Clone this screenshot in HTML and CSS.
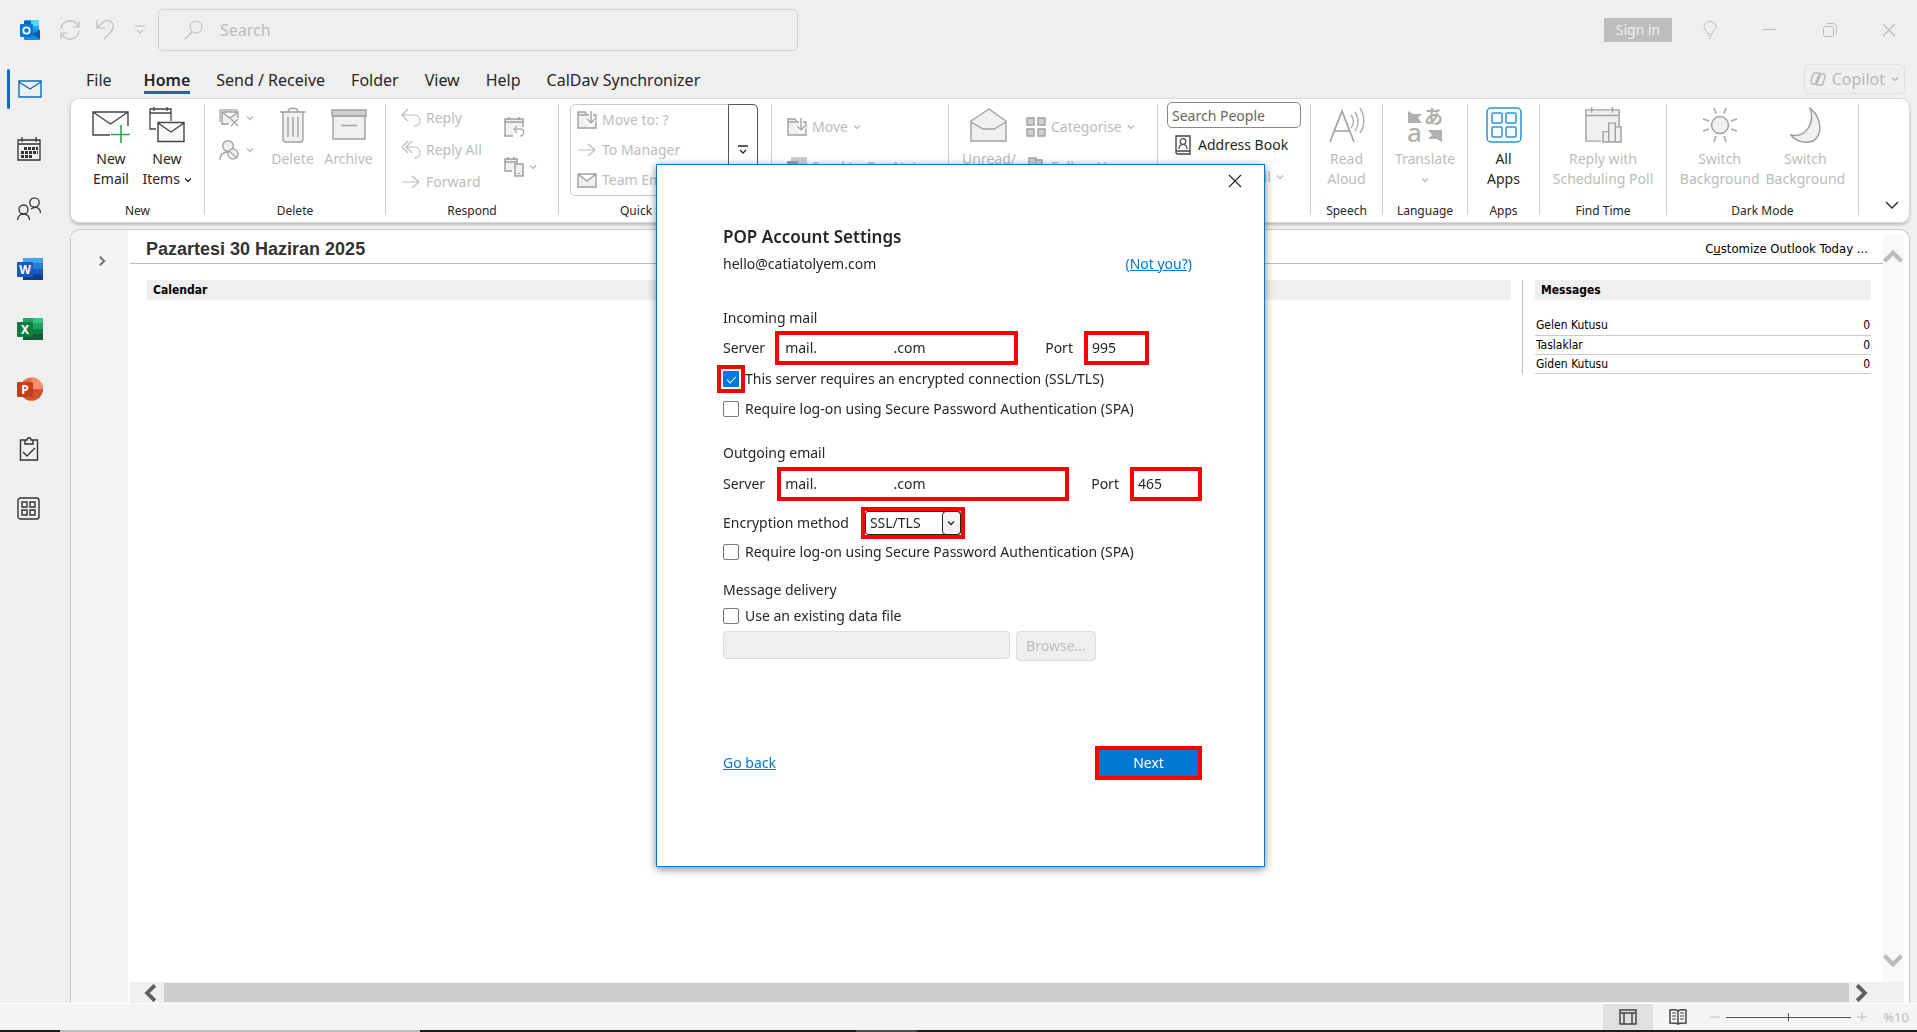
FILE: index.html
```html
<!DOCTYPE html>
<html lang="en">
<head>
  <meta charset="UTF-8" />
  <meta name="viewport" content="width=device-width, initial-scale=1.0"/>
  <title>Outlook - POP Account Settings</title>
  <link rel="stylesheet" href="styles.css">
</head>
<body>
  <!-- Shared icons -->
  <svg class="sprite" aria-hidden="true">
    <symbol id="chevron" viewBox="0 0 8 8"><path d="M1 2.500l3 3 3-3" fill="none" stroke="currentColor" stroke-width="1.300"/></symbol>
    <symbol id="close" viewBox="0 0 14 14"><path d="M1 1l12 12M13 1L1 13" fill="none" stroke="currentColor" stroke-width="1.200"/></symbol>
    <symbol id="arrow-right" viewBox="0 0 20 20"><path d="M1 10h17M11 4l7 6-7 6" fill="none" stroke="currentColor" stroke-width="1.200"/></symbol>
    <symbol id="arrow-thick" viewBox="0 0 14 14"><path d="M4 1l6 6-6 6" fill="none" stroke="currentColor" stroke-width="3"/></symbol>
    <symbol id="move" viewBox="0 0 20 20">
      <path d="M1 18V2h7l2 3h9v13z" fill="#f0f0f0" stroke="#a0a0a0" stroke-width="1.400"/>
      <path d="M1 5h8" stroke="#a0a0a0" stroke-width="1.400"/>
      <path d="M14 0v13M9 9l5 5 4-5" fill="none" stroke="#fff" stroke-width="4"/>
      <path d="M14 1v12M10 9l4 4 4-4" fill="none" stroke="#a8a8a8" stroke-width="1.500"/>
    </symbol>
  </svg>

  <header class="titlebar">
    <svg class="logo" viewBox="0 0 20 20">
      <path d="M5 0h13a1 1 0 0 1 1 1v11H4V1a1 1 0 0 1 1-1z" fill="#28a8ea"/>
      <path d="M4 1h7v6H4z" fill="#0364b8"/>
      <path d="M11 0h8v6h-8z" fill="#50d9ff"/>
      <path d="M4 19V10l15-1 1 1v9a1 1 0 0 1-1 1H5a1 1 0 0 1-1-1z" fill="#1490df"/>
      <path d="M20 10v9l-8-5z" fill="#0a5ba8"/>
      <rect y="4" width="13" height="13" rx="1" fill="#0078d4"/>
      <circle cx="6.500" cy="10.500" r="3.200" fill="none" stroke="#fff" stroke-width="1.800"/>
    </svg>
    <button class="quick" aria-label="Send/Receive all folders">
      <svg viewBox="0 0 20 20" width="20" height="20"><path d="M1 9a9 9 0 0 1 17-3M19 1v6h-6M19 11a9 9 0 0 1-17 3M1 19v-6h6" fill="none" stroke="currentColor" stroke-width="1.200"/></svg>
    </button>
    <button class="quick" aria-label="Undo">
      <svg viewBox="0 0 20 20" width="20" height="20"><path d="M2 0v8h8M2 8l5-5c4-4 9-3 11 1 1 4 0 6-3 9l-6 6" fill="none" stroke="currentColor" stroke-width="1.200"/></svg>
    </button>
    <button class="quick more" aria-label="Customise toolbar">
      <svg viewBox="0 0 10 10" width="10" height="10"><path d="M0 1h10M2 5l3 3 3-3" fill="none" stroke="currentColor" stroke-width="1.200"/></svg>
    </button>
    <label class="search">
      <svg viewBox="0 0 20 20" width="20" height="20"><circle cx="12" cy="7" r="6" fill="none" stroke="currentColor"/><path d="M8 12l-7 7" stroke="currentColor" stroke-width="1.200"/></svg>
      <input type="text" placeholder="Search" aria-label="Search">
    </label>
    <div class="window-buttons">
      <button class="signin">Sign in</button>
      <button aria-label="Tips"><svg viewBox="0 0 14 18" width="14" height="18"><path d="M5 13c0-3-4-4-4-7a6 5.500 0 0 1 12 0c0 3-4 4-4 7zM5 15h4M6 17.500h2" fill="none" stroke="currentColor"/></svg></button>
      <button aria-label="Minimise"><svg viewBox="0 0 14 14" width="14" height="14"><path d="M0 6.500h13" stroke="currentColor"/></svg></button>
      <button aria-label="Restore"><svg viewBox="0 0 14 14" width="14" height="14"><rect x=".5" y="3.500" width="10" height="10" rx="2" fill="none" stroke="currentColor"/><path d="M3 1.500Q4 .5 5 .5h5q3.500 0 3.500 3.500v5q0 1-1 2" fill="none" stroke="currentColor"/></svg></button>
      <button aria-label="Close"><svg width="14" height="14"><use href="#close"/></svg></button>
    </div>
  </header>

  <div class="workspace">
    <nav class="rail">
      <a href="#mail" class="active" aria-label="Mail"><svg viewBox="0 0 24 18" width="24" height="18"><path d="M1 1h22v16H1zM1 2l11 7 11-7" fill="none" stroke="currentColor" stroke-width="1.400"/></svg></a>
      <a href="#calendar" aria-label="Calendar"><svg viewBox="0 0 24 24" width="24" height="24"><path d="M1 3h22v20H1zM1 7h22M5 0v5M19 0v5" fill="none" stroke="currentColor" stroke-width="1.300"/><path d="M7 11.500h14M4 15.500h17M4 19.500h11" stroke="currentColor" stroke-width="3" stroke-dasharray="3 1"/></svg></a>
      <a href="#people" aria-label="People"><svg viewBox="0 0 24 24" width="24" height="24"><g fill="none" stroke="currentColor" stroke-width="1.300"><circle cx="17.500" cy="5.500" r="4.700"/><circle cx="6.500" cy="12.500" r="4.500"/><path d="M.6 23c.5-8 11-8 12 0M14 12c4-3 9-2 9.500 4"/></g></svg></a>
      <a href="#word" aria-label="Word"><svg viewBox="0 0 26 24" width="26" height="24"><path d="M6 1h20v6H6z" fill="#41a5ee"/><path d="M6 6h20v6H6z" fill="#2b7cd3"/><path d="M6 12h20v6H6z" fill="#185abd"/><path d="M6 17h20v6H6z" fill="#103f91"/><rect y="5" width="16" height="15" rx="1" fill="#185abd"/><text x="8" y="17" class="app-letter">W</text></svg></a>
      <a href="#excel" aria-label="Excel"><svg viewBox="0 0 26 24" width="26" height="24"><path d="M6 1h10v6H6z" fill="#21a366"/><path d="M16 1h10v6H16z" fill="#33c481"/><path d="M6 6h20v6H6z" fill="#21a366"/><path d="M6 12h20v6H6z" fill="#107c41"/><path d="M6 17h20v6H6z" fill="#185c37"/><rect y="5" width="16" height="15" rx="1" fill="#107c41"/><text x="8" y="17" class="app-letter">X</text></svg></a>
      <a href="#powerpoint" aria-label="PowerPoint"><svg viewBox="0 0 26 24" width="26" height="24"><circle cx="14.500" cy="12" r="11.500" fill="#ed6c47"/><path d="M14.500.5A11.500 11.500 0 0 1 26 12H14.500z" fill="#ff8f6b"/><path d="M3 12h23a11.500 11.500 0 0 1-23 0z" fill="#d35230"/><rect y="5" width="16" height="15" rx="1" fill="#c43e1c"/><text x="8" y="17" class="app-letter">P</text></svg></a>
      <a href="#todo" aria-label="To Do"><svg viewBox="0 0 24 24" width="24" height="24"><path d="M8 3H3.500v20h17V3H16M8 7V3h2c0-3 4-3 4 0h2v4zM6 15l4 4 8-8" fill="none" stroke="currentColor" stroke-width="1.400"/></svg></a>
      <a href="#apps" aria-label="More apps"><svg viewBox="0 0 24 24" width="24" height="24"><g fill="none" stroke="currentColor" stroke-width="1.400"><rect x="1" y="1" width="21" height="21" rx="2.500"/><path d="M5 5h5v5H5zM13 5h5v5h-5zM5 13h5v5H5zM13 13h5v5h-5z"/></g></svg></a>
    </nav>

    <main class="main">
      <div class="tabs">
        <a href="#file" class="file-tab">File</a>
        <a href="#home" class="active">Home</a>
        <a href="#send">Send / Receive</a>
        <a href="#folder">Folder</a>
        <a href="#view">View</a>
        <a href="#help">Help</a>
        <a href="#caldav">CalDav Synchronizer</a>
        <button class="copilot">
          <svg viewBox="0 0 16 16" width="16" height="16"><path d="M5 2h4c2 0 1 2 1 3L8 10c-1 2-1 3-3 3H3c-2 0-2-2-2-3l2-6c0-1 1-2 2-2zM11 3h2c2 0 2 2 2 3l-2 6c0 1-1 2-2 2H7c-2 0-1-2-1-3l2-5c1-2 1-3 3-3z" fill="none" stroke="currentColor" stroke-width="1.500"/></svg>
          Copilot
          <svg width="8" height="8"><use href="#chevron"/></svg>
        </button>
      </div>

      <!-- Ribbon -->
      <section class="ribbon">
        <div class="group g-new">
          <div class="tools">
            <button class="big">
              <svg viewBox="0 0 38 36" width="38" height="36"><path d="M1 5h35v23H1z" fill="#fafafa"/><path d="M18 28H1V5h35v14M1 5l17.500 12L36 5" fill="none" stroke="#444" stroke-width="1.400"/><path d="M29 18v19M19 27.500h19" stroke="#fff" stroke-width="4"/><path d="M29 18v19M19 27.500h19" stroke="#2ea44f" stroke-width="1.600"/></svg>
              <span>New<br>Email</span>
            </button>
            <button class="big">
              <svg viewBox="0 0 36 36" width="36" height="36"><path d="M7 22H1V2h21v12M1 6h21M5 0v4M18 0v4" fill="none" stroke="#444" stroke-width="1.300"/><path d="M9 15.500h26v19H9zM9 16l13 9 13-9" fill="#fafafa" stroke="#444" stroke-width="1.400"/></svg>
              <span>New<br>Items <svg width="8" height="8"><use href="#chevron"/></svg></span>
            </button>
          </div>
          <h2>New</h2>
        </div>

        <div class="group g-delete">
          <div class="tools">
            <div class="stack small">
              <button class="tool off" disabled aria-label="Ignore"><svg viewBox="0 0 20 20" width="20" height="20"><path d="M1 14V2h18" fill="none" stroke="#b0b0b0" stroke-width="1.500"/><path d="M10 16H3V4h16v6M3 4l8 6 8-6" fill="#f0f0f0" stroke="#a0a0a0" stroke-width="1.400"/><path d="M12 11l7 7M19 11l-7 7" stroke="#a0a0a0" stroke-width="1.400"/></svg><svg width="8" height="8"><use href="#chevron"/></svg></button>
              <button class="tool off" disabled aria-label="Junk"><svg viewBox="0 0 20 20" width="20" height="20"><circle cx="9" cy="6" r="5.300" fill="#f0f0f0" stroke="#a0a0a0" stroke-width="1.400"/><path d="M1 20c0-5 3-8 8-8" fill="none" stroke="#a0a0a0" stroke-width="1.400"/><circle cx="14" cy="14" r="5" fill="#f4f4f4" stroke="#a8a8a8" stroke-width="1.400"/><path d="M10 11l8 7" stroke="#a8a8a8" stroke-width="1.400"/></svg><svg width="8" height="8"><use href="#chevron"/></svg></button>
            </div>
            <button class="big off" disabled>
              <svg viewBox="0 0 28 36" width="28" height="36"><path d="M4 5h20v27q0 3-3 3H7q-3 0-3-3z" fill="#f0f0f0"/><path d="M1 5h26M4 5v27q0 3 3 3h14q3 0 3-3V5M9 5c0-5 10-5 10 0M9 10v20M14 10v20M19 10v20" fill="none" stroke="#a0a0a0" stroke-width="1.400"/></svg>
              <span>Delete</span>
            </button>
            <button class="big off" disabled>
              <svg viewBox="0 0 36 36" width="36" height="36"><path d="M2 9h32v23H2z" fill="#f0f0f0" stroke="#a0a0a0" stroke-width="1.400"/><path d="M1 3h34v6H1z" fill="#d0d0d0" stroke="#a0a0a0" stroke-width="1.400"/><path d="M10 18.500h16" stroke="#a0a0a0" stroke-width="1.400"/></svg>
              <span>Archive</span>
            </button>
          </div>
          <h2>Delete</h2>
        </div>

        <div class="group g-respond">
          <div class="tools">
            <div class="stack">
              <button class="tool off" disabled><svg viewBox="0 0 20 20" width="20" height="20"><path d="M7 1L1 7l6 6M1 7h12c8 0 8 11 0 11" fill="none" stroke="currentColor" stroke-width="1.200"/></svg>Reply</button>
              <button class="tool off" disabled><svg viewBox="0 0 20 20" width="20" height="20"><path d="M7 1L1 7l6 6M11 1L5 7l6 6M5 7h8c8 0 8 11 0 11" fill="none" stroke="currentColor" stroke-width="1.200"/></svg>Reply All</button>
              <button class="tool off" disabled><svg width="20" height="20"><use href="#arrow-right"/></svg>Forward</button>
            </div>
            <div class="stack pair">
              <button class="tool off" disabled aria-label="Meeting"><svg viewBox="0 0 20 20" width="20" height="20"><path d="M1 2h18v17H1z" fill="#f0f0f0"/><path d="M9 19H1V2h18v8M1 5h18M5 0v3M15 0v3" fill="none" stroke="#a0a0a0" stroke-width="1.500"/><path d="M20 10v10H9V9z" fill="#fff"/><path d="M13 9l-3 3 3 4M10 12h6c5 0 5 7 0 7" fill="none" stroke="#b0b0b0" stroke-width="1.400"/></svg></button>
              <button class="tool off" disabled aria-label="More respond actions"><svg viewBox="0 0 20 20" width="20" height="20"><path d="M8 14H1V2h12v4M1 5h12M4 0v3M10 0v3" fill="#f0f0f0" stroke="#a0a0a0" stroke-width="1.500"/><path d="M11 7h8v12h-8z" fill="#f0f0f0" stroke="#a0a0a0" stroke-width="1.500"/><path d="M14 16.500h2" stroke="#a0a0a0"/></svg><svg width="8" height="8"><use href="#chevron"/></svg></button>
            </div>
          </div>
          <h2>Respond</h2>
        </div>

        <div class="group g-quick">
          <div class="tools">
            <div class="gallery">
              <div class="stack">
                <button class="tool off" disabled><svg width="20" height="20"><use href="#move"/></svg>Move to: ?</button>
                <button class="tool off" disabled><svg width="20" height="20"><use href="#arrow-right"/></svg>To Manager</button>
                <button class="tool off" disabled><svg viewBox="0 0 20 20" width="20" height="20"><path d="M1 4h18v13H1zM1 4l9 7 9-7" fill="#f0f0f0" stroke="#a0a0a0" stroke-width="1.400"/></svg>Team Email</button>
              </div>
              <button class="expand" aria-label="More quick steps"><svg viewBox="0 0 10 10" width="10" height="10"><path d="M0 1h10M2 5l3 3 3-3" fill="none" stroke="currentColor" stroke-width="1.300"/></svg></button>
            </div>
          </div>
          <h2>Quick Steps</h2>
        </div>

        <div class="group g-move">
          <div class="tools">
            <div class="stack pair">
              <button class="tool off" disabled><svg width="20" height="20"><use href="#move"/></svg>Move <svg width="8" height="8"><use href="#chevron"/></svg></button>
              <button class="tool off" disabled><svg viewBox="0 0 20 20" width="20" height="20"><path d="M4 0h16v18H4z" fill="#d0d0d0"/><path d="M0 4h11v12H0z" fill="#a0a0a0"/></svg>Send to OneNote</button>
            </div>
          </div>
          <h2>Move</h2>
        </div>

        <div class="group g-tags">
          <div class="tools">
            <button class="big off" disabled>
              <svg viewBox="0 0 38 36" width="38" height="36"><path d="M1 14L19 2l17 12v20H1z" fill="#f0f0f0" stroke="#a0a0a0" stroke-width="1.400"/><path d="M1 15l12 7h11l12-7" fill="none" stroke="#a0a0a0" stroke-width="1.400"/></svg>
              <span>Unread/<br>Read</span>
            </button>
            <div class="stack pair">
              <button class="tool off" disabled><svg viewBox="0 0 20 20" width="20" height="20"><path d="M1 1h7v7H1zM12 1h7v7h-7zM1 12h7v7H1zM12 12h7v7h-7z" fill="#d0d0d0" stroke="#a0a0a0" stroke-width="1.400"/></svg>Categorise <svg width="8" height="8"><use href="#chevron"/></svg></button>
              <button class="tool off" disabled><svg viewBox="0 0 20 20" width="20" height="20"><path d="M3 20V1h7v2h6v10H3" fill="#d0d0d0" stroke="#a0a0a0" stroke-width="1.500"/><path d="M10 3v7" stroke="#a0a0a0"/></svg>Follow Up</button>
            </div>
          </div>
          <h2>Tags</h2>
        </div>

        <div class="group g-find">
          <div class="tools">
            <div class="stack">
              <input type="text" class="people" placeholder="Search People" aria-label="Search People">
              <button class="tool"><svg viewBox="0 0 20 20" width="20" height="20"><path d="M3 1h14v18H5q-2 0-2-2zM3 16h14" fill="none" stroke="#444" stroke-width="1.400"/><circle cx="10" cy="6.500" r="2.800" fill="none" stroke="#444" stroke-width="1.200"/><path d="M6 14c0-6 8-6 8 0" fill="none" stroke="#444" stroke-width="1.200"/></svg>Address Book</button>
              <button class="tool off" disabled><svg viewBox="0 0 20 20" width="20" height="20"><path d="M2 3h16l-6 7v7l-4-2v-5z" fill="#f0f0f0" stroke="#a0a0a0"/></svg>Filter Email <svg width="8" height="8"><use href="#chevron"/></svg></button>
            </div>
          </div>
          <h2>Find</h2>
        </div>

        <div class="group g-speech">
          <div class="tools">
            <button class="big off" disabled>
              <svg viewBox="0 0 36 36" width="36" height="36"><path d="M1 35L13 4l12 31M5 24h16" fill="none" stroke="#a0a0a0" stroke-width="1.700"/><path d="M22 8c3 4 3 9 0 13M26 5c4 6 4 13 0 19M31 1c5 8 5 18 0 25" fill="none" stroke="#b0b0b0" stroke-width="1.500"/></svg>
              <span>Read<br>Aloud</span>
            </button>
          </div>
          <h2>Speech</h2>
        </div>

        <div class="group g-language">
          <div class="tools">
            <button class="big off" disabled>
              <svg class="translate" viewBox="0 0 36 36" width="36" height="36"><path d="M1 4l5 3h9l-4 4 4 5H1zM35 35l-5-3h-9l4-4-4-5h14z" fill="#b0b0b0"/><text x="17" y="17" class="kana">あ</text><text x="0" y="35" class="latin-a">a</text></svg>
              <span>Translate<br><svg width="8" height="8"><use href="#chevron"/></svg></span>
            </button>
          </div>
          <h2>Language</h2>
        </div>

        <div class="group g-apps">
          <div class="tools">
            <button class="big">
              <svg viewBox="0 0 36 36" width="36" height="36"><g fill="#f8fcff" stroke="#2b94d9" stroke-width="1.500"><rect x="1" y="1" width="34" height="34" rx="4"/><rect x="6" y="6" width="10" height="10" rx="1"/><rect x="20" y="6" width="10" height="10" rx="1"/><rect x="6" y="20" width="10" height="10" rx="1"/><rect x="20" y="20" width="10" height="10" rx="1"/></g></svg>
              <span>All<br>Apps</span>
            </button>
          </div>
          <h2>Apps</h2>
        </div>

        <div class="group g-time">
          <div class="tools">
            <button class="big off" disabled>
              <svg viewBox="0 0 38 38" width="38" height="38"><path d="M1 3h35v32H1z" fill="#f0f0f0"/><path d="M17 36H1V3h35v18M1 9h35M7 0v6M29 0v6" fill="none" stroke="#a0a0a0" stroke-width="1.500"/><path d="M19 37V26h6v-9h7v4h6v16zM25 26v11M32 21v16" fill="#f0f0f0" stroke="#a0a0a0" stroke-width="1.500"/></svg>
              <span>Reply with<br>Scheduling Poll</span>
            </button>
          </div>
          <h2>Find Time</h2>
        </div>

        <div class="group g-dark">
          <div class="tools">
            <button class="big off" disabled>
              <svg viewBox="0 0 36 36" width="36" height="36"><circle cx="18" cy="18" r="8.500" fill="#f0f0f0" stroke="#a0a0a0" stroke-width="1.500"/><path d="M12 1l2 6M24 1l-2 6M12 35l2-6M24 35l-2-6M1 12l6 2M1 24l6-2M35 12l-6 2M35 24l-6-2" stroke="#a8a8a8" stroke-width="1.500"/></svg>
              <span>Switch<br>Background</span>
            </button>
            <button class="big off" disabled>
              <svg viewBox="0 0 36 36" width="36" height="36"><path d="M23 1c12 10 13 27 3 33-8 3-18 0-22-6 16 3 24-13 19-27z" fill="#f0f0f0" stroke="#a0a0a0" stroke-width="1.500"/></svg>
              <span>Switch<br>Background</span>
            </button>
          </div>
          <h2>Dark Mode</h2>
        </div>

        <button class="collapse" aria-label="Collapse ribbon"><svg viewBox="0 0 14 8" width="14" height="8"><path d="M1 1l6 6 6-6" fill="none" stroke="currentColor" stroke-width="1.400"/></svg></button>
      </section>

      <!-- Outlook Today -->
      <section class="content">
        <aside class="folder-pane">
          <button aria-label="Expand folder pane"><svg width="10" height="10"><use href="#arrow-thick"/></svg></button>
        </aside>
        <div class="viewer">
          <div class="page">
            <div class="today">
              <div class="today-head">
                <h1>Pazartesi 30 Haziran 2025</h1>
                <a href="#customize">C<u>u</u>stomize Outlook Today ...</a>
              </div>
              <div class="today-body">
                <div class="calendar">
                  <h3>Calendar</h3>
                </div>
                <div class="messages">
                  <h3>Messages</h3>
                  <table>
                    <tr><td>Gelen Kutusu</td><td>0</td></tr>
                    <tr><td>Taslaklar</td><td>0</td></tr>
                    <tr><td>Giden Kutusu</td><td>0</td></tr>
                  </table>
                </div>
              </div>
            </div>
            <div class="vscroll">
              <svg class="up" width="20" height="20"><use href="#arrow-thick"/></svg>
              <svg class="down" width="20" height="20"><use href="#arrow-thick"/></svg>
            </div>
          </div>
          <div class="hscroll">
            <svg class="left" width="18" height="18"><use href="#arrow-thick"/></svg>
            <div class="thumb"></div>
            <svg width="18" height="18"><use href="#arrow-thick"/></svg>
          </div>
        </div>
      </section>
    </main>
  </div>

  <footer class="statusbar">
    <button class="view active" aria-label="Normal view"><svg viewBox="0 0 18 16" width="18" height="16"><path d="M1 1h16v14H1zM1 4h16M5 4v11M13 4v11" fill="none" stroke="#444" stroke-width="1.500"/></svg></button>
    <button class="view" aria-label="Reading view"><svg viewBox="0 0 18 16" width="18" height="16"><path d="M9 2C7 0 4 1 1 1v13c3 0 6 0 8 1 2-1 5-1 8-1V1c-3 0-6-1-8 1zM9 2v13" fill="none" stroke="#444" stroke-width="1.500"/><path d="M3 4h4M3 7h4M3 10h4M11 4h4M11 7h4M11 10h4" stroke="#444"/></svg></button>
    <button class="zoom-step" aria-label="Zoom out"><svg viewBox="0 0 10 10" width="10" height="10"><path d="M0 5h10" stroke="currentColor"/></svg></button>
    <input type="range" min="0" max="100" value="50" aria-label="Zoom">
    <button class="zoom-step" aria-label="Zoom in"><svg viewBox="0 0 10 10" width="10" height="10"><path d="M0 5h10M5 0v10" stroke="currentColor"/></svg></button>
    <span class="zoom-value">%10</span>
  </footer>
  <div class="taskbar"></div>

  <!-- POP account dialog -->
  <div class="overlay">
    <form class="dialog">
      <div class="dialog-top">
        <button type="button" class="dialog-close" aria-label="Close"><svg width="14" height="14"><use href="#close"/></svg></button>
      </div>
      <div class="dialog-body">
        <h2>POP Account Settings</h2>
        <div class="row account">
          <span>hello@catiatolyem.com</span>
          <a href="#not-you">(Not you?)</a>
        </div>

        <h3>Incoming mail</h3>
        <div class="row incoming">
          <label for="inServer">Server</label>
          <input type="text" id="inServer" class="server marked" value="mail.                     .com">
          <label for="inPort">Port</label>
          <input type="text" id="inPort" class="port marked" value="995">
        </div>
        <label class="check ssl"><input type="checkbox" class="marked" checked>This server requires an encrypted connection (SSL/TLS)</label>
        <label class="check spa"><input type="checkbox">Require log-on using Secure Password Authentication (SPA)</label>

        <h3 class="outgoing-title">Outgoing email</h3>
        <div class="row outgoing">
          <label for="outServer">Server</label>
          <input type="text" id="outServer" class="server marked" value="mail.                     .com">
          <label for="outPort">Port</label>
          <input type="text" id="outPort" class="port marked" value="465">
        </div>
        <div class="row encryption">
          <label for="encryption">Encryption method</label>
          <span class="select marked">
            <select id="encryption">
              <option>None</option>
              <option selected>SSL/TLS</option>
              <option>STARTTLS</option>
              <option>Auto</option>
            </select>
            <span class="select-arrow"><svg width="8" height="8"><use href="#chevron"/></svg></span>
          </span>
        </div>
        <label class="check"><input type="checkbox">Require log-on using Secure Password Authentication (SPA)</label>

        <h3 class="delivery-title">Message delivery</h3>
        <label class="check"><input type="checkbox">Use an existing data file</label>
        <div class="row file">
          <input type="text" class="path" disabled aria-label="Data file">
          <button type="button" class="browse" disabled>Browse...</button>
        </div>

        <div class="row actions">
          <a href="#back">Go back</a>
          <button type="submit" class="next marked">Next</button>
        </div>
      </div>
    </form>
  </div>
</body>
</html>
```
FILE: styles.css
```css
/* Reset */
* {
  box-sizing: border-box;
  margin: 0;
  padding: 0;
}
body {
  display: flex;
  flex-direction: column;
  height: 100vh;
  overflow: hidden;
  background-color: #efefef;
  color: #262626;
  font-family: "Noto Sans", "Open Sans", sans-serif;
  font-size: 14px;
  line-height: 20px;
}
button,
input,
select {
  font: inherit;
  color: inherit;
}
button {
  border: none;
  background: none;
}
a {
  color: inherit;
  text-decoration: none;
}
svg {
  flex: none;
}
.sprite {
  position: absolute;
  width: 0;
  height: 0;
}

/* Title bar */
.titlebar {
  display: flex;
  align-items: center;
  flex: none;
  height: 59px;
  padding-left: 20px;
  color: #bcbcbc;
}
.logo {
  width: 20px;
  height: 20px;
  margin-right: 20px;
}
.quick {
  display: flex;
  margin-right: 15px;
}
.quick.more {
  margin: 0 13px 0 5px;
}
.search {
  display: flex;
  align-items: center;
  gap: 16px;
  width: 640px;
  height: 42px;
  padding-left: 25px;
  border: 1px solid #d0d0d0;
  border-radius: 5px;
}
.search input {
  flex: 1;
  border: none;
  outline: none;
  background: none;
  font-size: 16px;
}
.search input::placeholder {
  color: #bcbcbc;
}
.window-buttons {
  display: flex;
  align-items: center;
  margin-left: auto;
}
.window-buttons button {
  display: flex;
  justify-content: center;
  width: 60px;
}
.window-buttons .signin {
  width: 68px;
  height: 24px;
  margin-right: 8px;
  line-height: 24px;
  background-color: #bdbdbd;
  color: #f0f0f0;
}
.window-buttons svg {
  display: block;
}
.window-buttons button:last-child {
  width: 57px;
}

/* Left rail */
.workspace {
  display: flex;
  flex: 1;
  min-height: 0;
}
.rail {
  flex: none;
  width: 70px;
}
.rail a {
  display: flex;
  align-items: center;
  height: 60px;
  padding-left: 17px;
  color: #333;
}
.rail .active {
  padding-left: 7px;
  color: #0f6cbd;
}
.rail .active::before {
  content: "";
  width: 3px;
  height: 40px;
  margin-right: 8px;
  border-radius: 2px;
  background-color: #0f6cbd;
}
.app-letter {
  fill: #fff;
  font-size: 12px;
  font-weight: 700;
  text-anchor: middle;
}

/* Ribbon tabs */
.main {
  display: flex;
  flex: 1;
  flex-direction: column;
  min-width: 0;
  padding-right: 7px;
}
.tabs {
  display: flex;
  align-items: center;
  flex: none;
  gap: 26px;
  height: 39px;
  padding-left: 16px;
  font-size: 16px;
}
.tabs a {
  height: 31px;
  padding-top: 7px;
  line-height: 20px;
}
.tabs .file-tab {
  margin-right: 6px;
}
.tabs .active {
  border-bottom: 3px solid #0f6cbd;
  font-weight: 600;
}
.copilot {
  display: flex;
  align-items: center;
  gap: 6px;
  height: 30px;
  margin-left: auto;
  margin-right: 5px;
  padding: 0 5px;
  border: 1px solid #e0e0e0;
  border-radius: 5px;
  color: #b8b8b8;
  font-size: 16px;
}

/* Ribbon */
.ribbon {
  display: flex;
  flex: none;
  height: 125px;
  border: 1px solid #d8d8d8;
  border-radius: 9px;
  background-color: #fff;
  box-shadow: 0 2px 3px rgba(0, 0, 0, 0.2);
}
.group {
  position: relative;
  display: flex;
  flex: none;
  flex-direction: column;
  justify-content: space-between;
  padding-top: 5px;
  border-right: 1px solid transparent;
}
/* Divider is shorter than the ribbon */
.group::after {
  content: "";
  position: absolute;
  top: 5px;
  right: -1px;
  bottom: 7px;
  width: 1px;
  background-color: #d0d0d0;
}
.group h2 {
  padding-bottom: 1px;
  font-size: 12px;
  font-weight: 400;
  line-height: 20px;
  text-align: center;
}
.tools {
  display: flex;
  justify-content: center;
}
.big {
  display: flex;
  flex-direction: column;
  align-items: center;
  gap: 6px;
  min-width: 56px;
  padding-top: 3px;
  white-space: nowrap;
}
.big > svg {
  height: 36px;
}
.stack {
  display: flex;
  flex-direction: column;
}
.tool {
  display: flex;
  align-items: center;
  gap: 5px;
  height: 32px;
  white-space: nowrap;
}
.pair {
  padding-top: 3px;
}
.pair .tool {
  height: 40px;
}
.off {
  color: #bcbcbc;
}
.g-new { width: 134px; }
.g-delete { width: 181px; }
.g-respond { width: 173px; }
.g-quick { width: 213px; }
.g-move { width: 177px; }
.g-tags { width: 209px; }
.g-find { width: 153px; }
.g-speech { width: 72px; }
.g-language { width: 85px; }
.g-apps { width: 72px; }
.g-time { width: 127px; }
.g-dark { width: 192px; }

.g-new .tools {
  padding-left: 3px;
}
.g-delete .tools {
  padding-left: 5px;
}
.small {
  width: 46px;
}
.small .tool {
  gap: 7px;
  margin-top: -2px;
  margin-bottom: 2px;
}
.g-respond .tools {
  justify-content: space-between;
  padding: 0 21px 0 15px;
}
.g-respond .stack:first-child {
  margin-top: -2px;
}
.g-quick h2 {
  padding-right: 24px;
}
.g-quick .tools {
  justify-content: flex-start;
  padding-left: 11px;
}
.gallery {
  display: flex;
  width: 188px;
  height: 92px;
  border: 1px solid #c8c8c8;
  border-radius: 5px;
}
.gallery .stack {
  flex: 1;
  padding-left: 6px;
}
.gallery .tool {
  height: 30px;
}
.expand {
  width: 30px;
  margin: -1px;
  border: 1px solid #555;
  border-radius: 0 5px 5px 0;
}
.g-move .tools {
  justify-content: flex-start;
  padding-left: 15px;
}
.g-tags .tools {
  justify-content: flex-start;
  gap: 7px;
  padding-left: 10px;
}
.g-tags .big {
  min-width: 60px;
}
.people {
  width: 134px;
  height: 26px;
  margin-top: -2px;
  padding: 0 4px;
  border: 1px solid #888;
  border-radius: 5px;
}
.people::placeholder {
  color: #666;
}
.g-find .tool {
  padding-left: 6px;
}
.g-find .people + .tool {
  margin-top: 1px;
}
.g-dark .tools {
  gap: 6px;
}
.translate {
  overflow: visible;
}
.kana {
  fill: #b0b0b0;
  font-family: "Noto Sans CJK JP", sans-serif;
  font-size: 19px;
  font-weight: 700;
}
.latin-a {
  fill: #b0b0b0;
  font-size: 26px;
  font-weight: 500;
}
.collapse {
  align-self: flex-end;
  width: 40px;
  height: 36px;
  margin-left: auto;
  margin-right: -3px;
}

/* Content area */
.content {
  display: flex;
  flex: 1;
  min-height: 0;
  margin-top: 6px;
  padding-right: 5px;
  border: 1px solid #c8c8c8;
  border-bottom: none;
  border-radius: 10px 10px 0 0;
  background-color: #fff;
}
.folder-pane {
  flex: none;
  width: 57px;
  padding-top: 21px;
  padding-left: 26px;
  border-radius: 9px 0 0 0;
  background-color: #f4f4f4;
  color: #777;
}
.viewer {
  display: flex;
  flex: 1;
  flex-direction: column;
  margin-left: 2px;
}
.page {
  display: flex;
  flex: 1;
}
.today {
  flex: 1;
  font-family: "DejaVu Sans Condensed", "DejaVu Sans", sans-serif;
  font-size: 12px;
  color: #000;
}
.today-head {
  display: flex;
  align-items: center;
  justify-content: space-between;
  height: 34px;
  padding: 5px 15px 0 16px;
  border-bottom: 1px solid #bbb;
}
.today-head h1 {
  color: #333;
  font-family: "Liberation Sans", sans-serif;
  font-size: 18px;
}
.today-head a {
  font-size: 13px;
}
.today-body {
  display: flex;
  gap: 11px;
  padding: 16px 12px 0 17px;
}
.today-body h3 {
  height: 20px;
  padding-left: 6px;
  background-color: #efefef;
  font-size: 12px;
  line-height: 21px;
}
.calendar {
  flex: 1;
}
.messages {
  width: 349px;
  padding-left: 12px;
  border-left: 1px solid #bbb;
}
.messages table {
  width: 100%;
  margin-top: 16px;
  border-collapse: collapse;
}
.messages td {
  height: 19px;
  padding: 0 1px;
  border-bottom: 1px solid #ccc;
  line-height: 18px;
}
.messages td:last-child {
  text-align: right;
}

/* Scrollbars */
.vscroll {
  display: flex;
  flex-direction: column;
  justify-content: space-between;
  width: 21px;
  margin-top: 5px;
  padding: 12px 0;
  background-color: #f8f8f8;
  color: #bcbcbc;
}
.up {
  transform: rotate(-90deg);
}
.down {
  transform: rotate(90deg);
}
.hscroll {
  display: flex;
  align-items: center;
  height: 21px;
  padding: 1px 34px 1px 12px;
  background-color: #efefef;
  color: #606060;
}
.hscroll .thumb {
  flex: 1;
  height: 19px;
  margin: 0 3px 0 4px;
  background-color: #cdcdcd;
}
.left {
  transform: rotate(180deg);
}

/* Status bar */
.statusbar {
  display: flex;
  align-items: center;
  justify-content: flex-end;
  flex: none;
  height: 27px;
  padding-right: 8px;
  border-top: 1px solid #fff;
  background-color: #f4f4f4;
  color: #bcbcbc;
  font-size: 13px;
}
.view {
  display: flex;
  align-items: center;
  justify-content: center;
  width: 50px;
  height: 26px;
}
.view.active {
  background-color: #e0e0e0;
}
.zoom-step {
  display: flex;
  margin: 0 6px;
}
.statusbar input {
  width: 125px;
  height: 10px;
  appearance: none;
  background: linear-gradient(#555, #555) center / 100% 1px no-repeat;
}
.statusbar input::-webkit-slider-thumb {
  width: 1px;
  height: 8px;
  appearance: none;
  background-color: #555;
}
.view + .zoom-step {
  margin-left: 7px;
}
.zoom-value {
  margin-left: 10px;
}
/* Top edge of the Windows taskbar */
.taskbar {
  flex: none;
  height: 2px;
  background: linear-gradient(90deg, #1c1c1c 60px, #bbb 60px, #bbb 420px, #1c1c1c 420px, #1c1c1c 856px, #4c4c4c 856px, #4c4c4c 917px, #1c1c1c 917px);
}

/* Dialog */
.overlay {
  position: fixed;
  inset: 0;
  display: flex;
  align-items: center;
  justify-content: center;
  padding: 0 0 2px 4px;
}
.dialog {
  width: 609px;
  border: 1px solid #0078d4;
  background-color: #fff;
  box-shadow: 0 2px 8px rgba(0, 0, 0, 0.5);
}
.dialog-top {
  display: flex;
  justify-content: flex-end;
  height: 36px;
  padding-right: 11px;
}
.dialog-close {
  width: 36px;
}
.dialog-body {
  display: flex;
  flex-direction: column;
  padding: 24px 66px 90px;
}
.dialog h2 {
  font-size: 17px;
  font-weight: 600;
  line-height: 24px;
}
.dialog h3 {
  font-size: 14px;
  font-weight: 400;
}
.dialog a {
  color: #0078d4;
  text-decoration: underline;
}
.row {
  display: flex;
  align-items: center;
}
.account {
  justify-content: space-between;
  margin: 5px 6px 34px 0;
}
.marked {
  outline: 4px solid #f00;
}
.server,
.port {
  height: 26px;
  padding: 0 6px;
  border: none;
}
.port {
  padding-left: 4px;
}
.incoming {
  margin: 7px 0 8px;
}
.incoming .server {
  width: 235px;
  margin: 0 31px 0 14px;
}
.incoming .port {
  width: 57px;
  margin-left: 15px;
}
.outgoing {
  margin: 8px 0 14px;
}
.outgoing .server {
  width: 284px;
  margin: 0 26px 0 16px;
  padding-left: 4px;
}
.outgoing .port {
  width: 64px;
  margin-left: 15px;
}
.check {
  display: flex;
  align-items: center;
  gap: 6px;
}
.check input {
  width: 16px;
  height: 16px;
  appearance: none;
  border: 1px solid #777;
  border-radius: 2px;
}
.check input:checked {
  border-color: #0078d4;
  background-color: #0078d4;
}
.check input:checked::before {
  content: "";
  display: block;
  width: 8px;
  height: 4px;
  margin: 4px 3px;
  border-bottom: 1px solid #fff;
  border-left: 1px solid #fff;
  transform: rotate(-45deg);
}
.check .marked {
  border-radius: 0;
  outline-offset: 2px;
}
.spa {
  margin-top: 10px;
}
.outgoing-title {
  margin-top: 24px;
}
.encryption {
  gap: 16px;
  margin-bottom: 7px;
}
.select {
  position: relative;
}
.select select {
  display: block;
  width: 96px;
  height: 24px;
  padding-left: 4px;
  appearance: none;
  border: 1px solid #222;
  border-radius: 3px;
  background-color: #fff;
}
.select-arrow {
  position: absolute;
  top: 0;
  right: 0;
  display: flex;
  align-items: center;
  justify-content: center;
  width: 19px;
  height: 24px;
  border: 1px solid #222;
  border-radius: 4px;
  background-color: #f4f4f4;
  pointer-events: none;
}
.delivery-title {
  margin: 18px 0 6px;
}
.file {
  align-items: flex-start;
  gap: 6px;
  margin: 5px 0 89px;
}
.path,
.browse {
  height: 30px;
  border: 1px solid #dcdcdc;
  border-radius: 4px;
  background-color: #efefef;
}
.path {
  width: 287px;
  height: 28px;
}
.browse {
  width: 80px;
  color: #bcbcbc;
}
.actions {
  justify-content: space-between;
}
.next {
  width: 99px;
  height: 26px;
  background-color: #0078d4;
  color: #fff;
}
```
